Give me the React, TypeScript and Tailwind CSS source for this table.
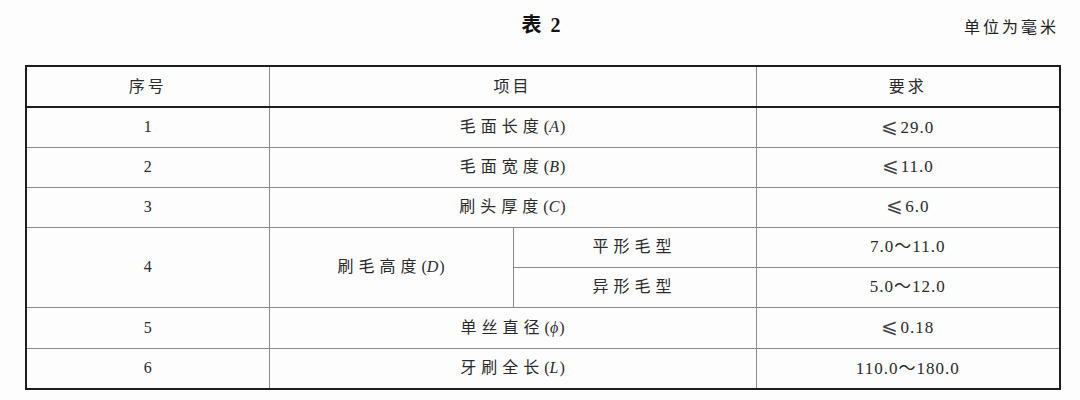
import React from 'react';

// 表 2 — toothbrush dimension requirements (GB-style spec table)

type Row = {
  no: string;
  item: React.ReactNode;
  req: React.ReactNode;
};

const font = 'font-["Liberation_Serif","DejaVu_Serif","Noto_Sans_CJK_SC",serif]';

function Item(props: { cn: string; sym: string }) {
  return (
    <span>
      <span className="tracking-[5px]">{props.cn}</span>
      <span>(</span>
      <span className="italic">{props.sym}</span>
      <span className="ml-[1px]">)</span>
    </span>
  );
}

function Le(props: { v: string }) {
  return (
    <span>
      <span className='text-[20px] leading-none font-["DejaVu_Serif",serif] text-[#444] mr-[1px]'>⩽</span>
      {props.v}
    </span>
  );
}

const rows: Row[] = [
  { no: '1', item: <Item cn="毛面长度" sym="A" />, req: <Le v="29.0" /> },
  { no: '2', item: <Item cn="毛面宽度" sym="B" />, req: <Le v="11.0" /> },
  { no: '3', item: <Item cn="刷头厚度" sym="C" />, req: <Le v="6.0" /> },
];

const tailRows: Row[] = [
  { no: '5', item: <Item cn="单丝直径" sym="ϕ" />, req: <Le v="0.18" /> },
  { no: '6', item: <Item cn="牙刷全长" sym="L" />, req: '110.0～180.0' },
];

const cell = 'border border-[#8a8a8a] text-center align-middle p-0';

export default function App() {
  return (
    <div className={`w-[1080px] h-[400px] bg-[#fdfdfd] text-[#2a2a2a] ${font}`}>
      <div className="mx-[25px] w-[1034px] h-[50px] grid grid-cols-3 items-center">
        <div />
        <div className="text-center text-[20px] font-bold text-[#111] tracking-[2px]">表 2</div>
        <div className="text-right text-[16px] tracking-[3px] mt-[6px] text-[#222]">单位为毫米</div>
      </div>

      <table className="mt-[15px] ml-[25px] w-[1034px] table-fixed border-collapse border-2 border-[#1e1e1e] text-[16px]">
        <colgroup>
          <col className="w-[243px]" />
          <col className="w-[244px]" />
          <col className="w-[243px]" />
          <col className="w-[304px]" />
        </colgroup>
        <thead>
          <tr className="h-[41px]">
            <th className={`${cell} font-normal tracking-[3px] border-b-2 border-b-[#1e1e1e]`}>序号</th>
            <th colSpan={2} className={`${cell} font-normal tracking-[3px] border-b-2 border-b-[#1e1e1e]`}>
              项目
            </th>
            <th className={`${cell} font-normal tracking-[3px] border-b-2 border-b-[#1e1e1e]`}>要求</th>
          </tr>
        </thead>
        <tbody>
          {rows.map((r) => (
            <tr key={r.no} className="h-[40px]">
              <td className={cell}>{r.no}</td>
              <td colSpan={2} className={cell}>
                {r.item}
              </td>
              <td className={`${cell} text-[17px] tracking-[1px]`}>{r.req}</td>
            </tr>
          ))}
          <tr className="h-[40px]">
            <td rowSpan={2} className={cell}>
              4
            </td>
            <td rowSpan={2} className={cell}>
              <Item cn="刷毛高度" sym="D" />
            </td>
            <td className={`${cell} tracking-[5px]`}>平形毛型</td>
            <td className={`${cell} text-[17px] tracking-[1px]`}>7.0～11.0</td>
          </tr>
          <tr className="h-[40px]">
            <td className={`${cell} tracking-[5px]`}>异形毛型</td>
            <td className={`${cell} text-[17px] tracking-[1px]`}>5.0～12.0</td>
          </tr>
          {tailRows.map((r) => (
            <tr key={r.no} className="h-[41px]">
              <td className={cell}>{r.no}</td>
              <td colSpan={2} className={cell}>
                {r.item}
              </td>
              <td className={`${cell} text-[17px] tracking-[1px]`}>{r.req}</td>
            </tr>
          ))}
        </tbody>
      </table>
    </div>
  );
}
